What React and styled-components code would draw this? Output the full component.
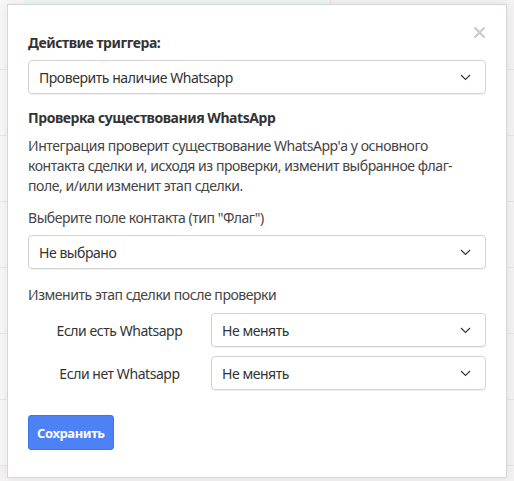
import React from "react";
import styled, { createGlobalStyle } from "styled-components";

const Global = createGlobalStyle`
  html, body { margin: 0; padding: 0; }
  body {
    width: 514px;
    height: 481px;
    overflow: hidden;
    background: #f4f2f2;
    font-family: "Noto Sans", "Open Sans", sans-serif;
    letter-spacing: -0.45px;
    color: #333;
  }
`;

const Page = styled.div`
  position: relative;
  width: 514px;
  height: 481px;
  display: grid;
  grid-template-columns: 24px 306px 1fr;
  grid-template-rows: 4px repeat(7, 66px);
  background: #f4f2f2;
`;

const Cell = styled.div`
  background: ${(p) => (p.$accent ? "#eef6f2" : p.$side ? "#f8f8f8" : "transparent")};
  border-bottom: 1px solid ${(p) => (p.$noLine ? "transparent" : "#e8e6e6")};
  border-left: ${(p) => (p.$divider ? "1px solid #e6e4e4" : "none")};
`;

const Modal = styled.div`
  position: absolute;
  left: 7px;
  top: 4px;
  width: 458px;
  height: 424px;
  padding: 28px 20px 20px 20px;
  background: #fff;
  border: 1px solid #d6d6d6;
  box-shadow: 0 0 12px rgba(0, 0, 0, 0.08);
  display: flex;
  flex-direction: column;
`;

const Close = styled.button`
  position: absolute;
  top: 20px;
  right: 20px;
  width: 14px;
  height: 14px;
  padding: 0;
  border: none;
  background: none;
  display: flex;
  align-items: center;
  justify-content: center;
`;

const Title = styled.div`
  font-size: 14px;
  line-height: 20px;
  font-weight: 700;
  color: #333;
  margin-top: ${(p) => p.$mt || 0}px;
`;

const Text = styled.div`
  font-size: 14px;
  line-height: 20px;
  color: #444;
  margin-top: ${(p) => p.$mt || 0}px;
`;

const SelectBox = styled.div`
  box-sizing: border-box;
  height: 34px;
  border: 1px solid #d2d2d2;
  border-radius: 4px;
  box-shadow: 0 1px 1px rgba(0, 0, 0, 0.06);
  display: flex;
  align-items: center;
  justify-content: space-between;
  padding: 0 14px 0 10px;
  font-size: 14px;
  color: #333;
  margin-top: ${(p) => p.$mt || 0}px;
  flex: ${(p) => (p.$grow ? 1 : "none")};
`;

const Row = styled.div`
  display: flex;
  align-items: center;
  margin-top: ${(p) => p.$mt || 0}px;
`;

const RowLabel = styled.div`
  width: 183px;
  text-align: center;
  font-size: 14px;
  color: #333;
`;

const Button = styled.button`
  align-self: flex-start;
  margin-top: 25px;
  height: 35px;
  padding: 0 8px;
  background: #4c82f6;
  border: 1px solid #3f74e6;
  border-radius: 3px;
  color: #fff;
  font-family: "Noto Sans", "Open Sans", sans-serif;
  letter-spacing: -0.4px;
  font-weight: 700;
  font-size: 13px;
`;

const Chevron = () => (
  <svg width="11" height="7" viewBox="0 0 11 7">
    <polyline points="1,1 5.5,5.5 10,1" fill="none" stroke="#333" strokeWidth="1.1" />
  </svg>
);

const Select = ({ value, mt, grow }) => (
  <SelectBox $mt={mt} $grow={grow}>
    <span>{value}</span>
    <Chevron />
  </SelectBox>
);

export default function App() {
  const rows = Array.from({ length: 8 });
  return (
    <>
      <Global />
      <Page>
        {rows.map((_, i) => (
          <React.Fragment key={i}>
            <Cell $side $noLine={i === 0} />
            <Cell $accent={i === 0} $noLine={i === 0} />
            <Cell $divider $noLine={i === 0} />
          </React.Fragment>
        ))}
        <Modal>
          <Close aria-label="close">
            <svg width="13" height="13" viewBox="0 0 13 13">
              <path d="M1.5 1.5 L11.5 11.5 M11.5 1.5 L1.5 11.5" stroke="#cacaca" strokeWidth="2.2" />
            </svg>
          </Close>
          <Title>Действие триггера:</Title>
          <Select value="Проверить наличие Whatsapp" mt={7} />
          <Title $mt={14}>Проверка существования WhatsApp</Title>
          <Text $mt={8}>
            Интеграция проверит существование WhatsApp'а у основного контакта сделки и, исходя из
            проверки, изменит выбранное флаг-поле, и/или изменит этап сделки.
          </Text>
          <Text $mt={12}>Выберите поле контакта (тип "Флаг")</Text>
          <Select value="Не выбрано" mt={7} />
          <Text $mt={16}>Изменить этап сделки после проверки</Text>
          <Row $mt={8}>
            <RowLabel>Если есть Whatsapp</RowLabel>
            <Select value="Не менять" grow />
          </Row>
          <Row $mt={9}>
            <RowLabel>Если нет Whatsapp</RowLabel>
            <Select value="Не менять" grow />
          </Row>
          <Button>Сохранить</Button>
        </Modal>
      </Page>
    </>
  );
}
